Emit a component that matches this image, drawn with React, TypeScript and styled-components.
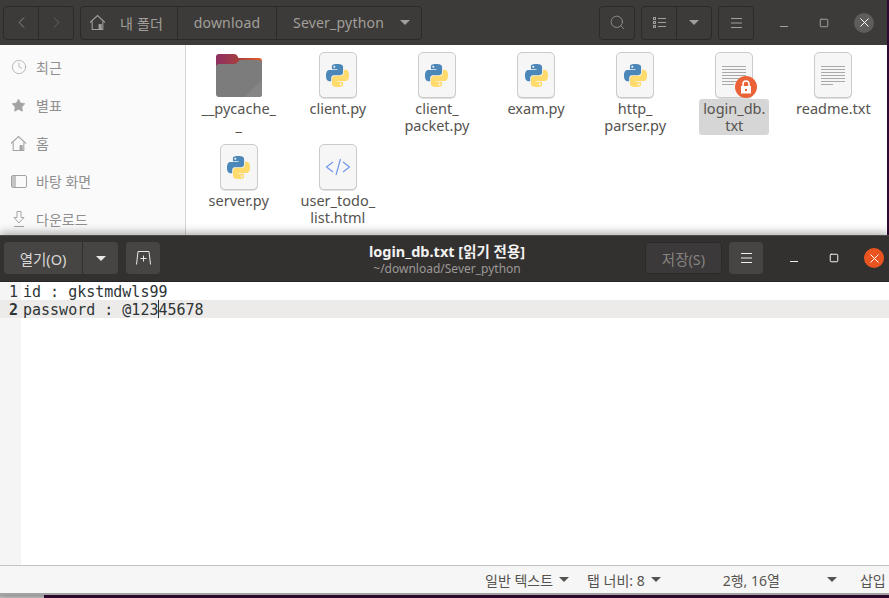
import React from "react";
import styled, { createGlobalStyle } from "styled-components";
import { ChevronLeft, ChevronRight, Search, Square, X, Star, Clock } from "lucide-react";

const UI = `"Noto Sans", "Noto Sans CJK KR", sans-serif`;

const Global = createGlobalStyle`
  html, body { margin: 0; padding: 0; background: #2c0a2e; overflow: hidden; }
  * { box-sizing: border-box; }
`;

const Desktop = styled.div`
  width: 889px; height: 598px; display: flex; flex-direction: column;
  background: #2f0a31; font-family: ${UI}; overflow: hidden;
`;
const FilesWindow = styled.section`
  width: 887px; height: 235px; flex: none; display: flex; flex-direction: column; background: #fff;
`;
const FilesHeader = styled.header`
  height: 45px; flex: none; background: #3d3b39; display: flex; align-items: center; padding: 0 0 0 3px;
`;
const Group = styled.div<{ $w: number; $ml?: number }>`
  width: ${p => p.$w}px; height: 34px; margin-left: ${p => p.$ml ?? 0}px; flex: none;
  display: flex; border: 1px solid #2b2a28; border-radius: 4px; background: #3d3b39;
`;
const Seg = styled.div<{ $w?: number; $last?: boolean; $pad?: number }>`
  ${p => (p.$w ? `width:${p.$w}px;flex:none;` : "flex:1;")}
  display: flex; align-items: center; justify-content: ${p => (p.$pad !== undefined ? "flex-start" : "center")};
  padding-left: ${p => p.$pad ?? 0}px;
  border-right: ${p => (p.$last ? "none" : "1px solid #2b2a28")};
  color: #a19f9b; font-size: 14px; white-space: nowrap;
`;
const PathText = styled.span<{ $ml?: number }>`
  margin-left: ${p => p.$ml ?? 0}px; letter-spacing: 0.2px;
`;
const Caret = styled.span<{ $c?: string; $ml?: number }>`
  display: inline-block; width: 0; height: 0; flex: none; margin-left: ${p => p.$ml ?? 0}px;
  border-left: 5px solid transparent; border-right: 5px solid transparent;
  border-top: 5px solid ${p => p.$c ?? "#a19f9b"};
`;
const WinControls = styled.div<{ $ml: number; $gap: number }>`
  display: flex; align-items: center; margin-left: ${p => p.$ml}px; gap: ${p => p.$gap}px;
`;
const WinBtn = styled.div`
  width: 20px; height: 20px; display: flex; align-items: center; justify-content: center; flex: none;
`;
const MinBar = styled.span<{ $c: string }>`
  width: 8px; height: 1px; background: ${p => p.$c}; margin-top: 7px;
`;
const CloseBtn = styled(WinBtn)<{ $bg: string }>`
  border-radius: 50%; background: ${p => p.$bg}; color: #fff;
`;
const FilesBody = styled.div`
  flex: 1; display: flex; min-height: 0; overflow: hidden;
`;
const Sidebar = styled.nav`
  width: 186px; flex: none; background: #fafafa; border-right: 1px solid #d6d6d6;
  padding-top: 3px; display: flex; flex-direction: column;
`;
const SideRow = styled.div`
  height: 38px; flex: none; display: flex; align-items: center; padding-left: 10px; gap: 9px;
  color: #8f8f8f; font-size: 14px;
`;
const SideIcon = styled.span`
  width: 17px; height: 17px; display: flex; align-items: center; justify-content: center; color: #a3a3a3; flex: none;
`;
const FileGrid = styled.div`
  flex: 1; background: #fff; padding: 7px 0 0 3.2px; display: grid;
  grid-template-columns: repeat(7, 99.12px); grid-auto-rows: 92px;
`;
const FileCell = styled.div`
  display: flex; flex-direction: column; align-items: center;
`;
const IconBox = styled.div`
  position: relative; width: 46px; height: 46px; display: flex; justify-content: center; align-items: center; flex: none;
`;
const Page = styled.div`
  width: 38px; height: 46px; border: 1px solid #cbcbcb; border-radius: 5px; background: #f6f6f6;
  box-shadow: 0 1px 0 #dedede; display: flex; align-items: center; justify-content: center;
`;
const TextLines = styled.div`
  width: 24px; display: flex; flex-direction: column; gap: 2px;
`;
const TextLine = styled.span<{ $short?: boolean }>`
  height: 1px; background: #a9a9a9; width: ${p => (p.$short ? "12px" : "24px")};
`;
const LockBadge = styled.div`
  position: absolute; left: 24px; top: 24px; width: 22px; height: 22px; border-radius: 50%;
  background: #ec6237; display: flex; align-items: center; justify-content: center;
`;
const FileLabel = styled.div<{ $sel?: boolean }>`
  margin-top: 1px; min-width: 70px; padding: 1px 2px 1px; text-align: center; white-space: pre-line;
  font-size: 14.5px; line-height: 17px; color: #55534f; border-radius: 3px;
  background: ${p => (p.$sel ? "#d6d6d6" : "transparent")};
`;
const EditorWindow = styled.section`
  position: relative; width: 889px; height: 360px; flex: none; display: flex; flex-direction: column;
  background: #fff; box-shadow: 0 -2px 9px rgba(0,0,0,.35);
`;
const EditorHeader = styled.header`
  height: 47px; flex: none; display: flex; align-items: center; padding: 0 0 1px 4px;
  background: #333030; border-top: 1px solid #4d4b48; border-bottom: 1px solid #262424;
`;
const SolidBtn = styled.div<{ $w: number; $ml?: number }>`
  width: ${p => p.$w}px; height: 32px; flex: none; margin-left: ${p => p.$ml ?? 0}px;
  background: #474543; border-radius: 4px; color: #efefed; font-size: 14px;
  display: flex; align-items: center; justify-content: center;
`;
const SplitBtn = styled.div`
  width: 114px; height: 32px; flex: none; display: flex; border-radius: 4px; background: #474543;
`;
const SplitPart = styled.div<{ $w: number; $sep?: boolean }>`
  width: ${p => p.$w}px; display: flex; align-items: center; justify-content: center;
  color: #d8d8d6; font-size: 14.5px; border-right: ${p => (p.$sep ? "1px solid #333030" : "none")};
`;
const DisabledBtn = styled.div`
  width: 77px; height: 32px; flex: none; border: 1px solid #2b2929; border-radius: 4px;
  background: #3b3939; color: #858380; font-size: 14.5px; display: flex; align-items: center; justify-content: center;
`;
const TitleBox = styled.div`
  width: 485px; flex: none; display: flex; flex-direction: column; align-items: center; padding: 3px 0 0 89px;
`;
const Title = styled.div`
  color: #f2f2f0; font-weight: 700; font-size: 14.5px; line-height: 18px;
`;
const Subtitle = styled.div`
  color: #9b9996; font-size: 12px; line-height: 17px;
`;
const EditorBody = styled.div`
  flex: 1; display: flex; flex-direction: column; background: #fff;
  background-image: linear-gradient(#f5f5f5, #f5f5f5); background-size: 21px 100%; background-repeat: no-repeat;
  font-family: "DejaVu Sans Mono", monospace; font-size: 15px; color: #2e3436;
`;
const CodeLine = styled.div<{ $cur?: boolean }>`
  height: 18px; line-height: 20px; display: flex; background: ${p => (p.$cur ? "#ecebe9" : "transparent")};
`;
const LineNo = styled.span<{ $cur?: boolean }>`
  width: 18px; text-align: right; flex: none; font-weight: ${p => (p.$cur ? 700 : 400)}; margin-right: 5px;
`;
const Code = styled.span`
  white-space: pre;
`;
const TextCaret = styled.span`
  display: inline-block; width: 1px; height: 18px; margin-right: -1px; background: #2e3436; vertical-align: top;
`;
const StatusBar = styled.footer`
  height: 30px; flex: none; display: flex; align-items: center; background: #f6f6f6;
  border-top: 1px solid #c4c4c4; border-bottom: 2px solid #a3a3a3; color: #55534f; font-size: 14px;
`;
const StatusText = styled.span<{ $ml: number }>`
  margin-left: ${p => p.$ml}px; white-space: nowrap;
`;
const BottomEdge = styled.div`
  flex: 1; display: flex;
`;
const EdgeLeft = styled.div`
  width: 44px; background: linear-gradient(#a8a8a8, #c2c2c2);
`;

const BLUE = "M14.25.18l.9.2.73.26.59.3.45.32.34.34.25.34.16.33.1.3.04.26.02.2-.01.13V8.5l-.05.63-.13.55-.21.46-.26.38-.3.31-.33.25-.35.19-.35.14-.33.1-.3.07-.26.04-.21.02H8.77l-.69.05-.59.14-.5.22-.41.27-.33.32-.27.35-.2.36-.15.37-.1.35-.07.32-.04.27-.02.21v3.06H3.17l-.21-.03-.28-.07-.32-.12-.35-.18-.36-.26-.36-.36-.35-.46-.32-.59-.28-.73-.21-.88-.14-1.05-.05-1.23.06-1.22.16-1.04.24-.87.32-.71.36-.57.4-.44.42-.33.42-.24.4-.16.36-.1.32-.05.24-.01h.16l.06.01h8.16v-.83H6.18l-.01-2.75-.02-.37.05-.34.11-.31.17-.28.25-.26.31-.23.38-.2.44-.18.51-.15.58-.12.64-.1.71-.06.77-.04.84-.02 1.27.05zm-6.3 1.98l-.23.33-.08.41.08.41.23.34.33.22.41.09.41-.09.33-.22.23-.34.08-.41-.08-.41-.23-.33-.33-.22-.41-.09-.41.09z";
const YELLOW = "M21.04 6.11l.28.06.32.12.35.18.36.27.36.35.35.47.32.59.28.73.21.88.14 1.04.05 1.23-.06 1.23-.16 1.04-.24.86-.32.71-.36.57-.4.45-.42.33-.42.24-.4.16-.36.09-.32.05-.24.02-.16-.01h-8.22v.82h5.84l.01 2.76.02.36-.05.34-.11.31-.17.29-.25.25-.31.24-.38.2-.44.17-.51.15-.58.13-.64.09-.71.07-.77.04-.84.01-1.27-.04-1.07-.14-.9-.2-.73-.25-.59-.3-.45-.33-.34-.34-.25-.34-.16-.33-.1-.3-.04-.25-.02-.2.01-.13v-5.34l.05-.64.13-.54.21-.46.26-.38.3-.32.33-.24.35-.2.35-.14.33-.1.3-.06.26-.04.21-.02.13-.01h5.84l.69-.05.59-.14.5-.21.41-.28.33-.32.27-.35.2-.36.15-.36.1-.35.07-.32.04-.28.02-.21V6.07h2.09l.14.01zm-6.47 14.25l-.23.33-.08.41.08.41.23.33.33.23.41.08.41-.08.33-.23.23-.33.08-.41-.08-.41-.23-.33-.33-.23-.41-.08-.41.08z";

const PyLogo = () => (
  <svg width="23" height="23" viewBox="0 0 24 24">
    <path d={BLUE} fill="#4c87ba" />
    <path d={YELLOW} fill="#ffdb6e" />
  </svg>
);
const HomeGlyph = ({ c, s = 17 }: { c: string; s?: number }) => (
  <svg width={s} height={s} viewBox="0 0 16 16" fill="none" stroke={c} strokeWidth="1">
    <path d="M1 8 8 1.5 15 8" />
    <path d="M3 7v7.5h10V7" />
    <path d="M9 14.5V9.5h3v5" fill={c} stroke="none" />
  </svg>
);
const FolderIcon = () => (
  <svg width="46" height="43" viewBox="0 0 46 43">
    <defs>
      <linearGradient id="fTop" x1="0" y1="0" x2="1" y2="0">
        <stop offset="0" stopColor="#8e2f62" />
        <stop offset=".5" stopColor="#a5413f" />
        <stop offset="1" stopColor="#e95f2b" />
      </linearGradient>
    </defs>
    <path d="M3 0h15c2 0 3 1 4 3l.5 1H43a3 3 0 0 1 3 3v12H0V3a3 3 0 0 1 3-3z" fill="url(#fTop)" />
    <path d="M3 10h15c2 0 3-.6 4-2.2.6-1 1.4-1.8 3-1.8h18a3 3 0 0 1 3 3v31a3 3 0 0 1-3 3H3a3 3 0 0 1-3-3V13a3 3 0 0 1 3-3z" fill="#7c7c7c" />
    <path d="M46 26v14a3 3 0 0 1-3 3H29z" fill="#858585" />
  </svg>
);
const HtmlIcon = () => (
  <svg width="26" height="22" viewBox="0 0 26 22" fill="none" stroke="#6f97ea" strokeWidth="1.2">
    <path d="M8 6 1.5 11 8 16" />
    <path d="M15.5 3 11 19" />
    <path d="M18 6l6.5 5L18 16" />
  </svg>
);
const LockGlyph = () => (
  <svg width="12" height="14" viewBox="0 0 12 14">
    <path d="M3 6V4a3 3 0 0 1 6 0v2" fill="none" stroke="#fff" strokeWidth="1.6" />
    <path fillRule="evenodd" d="M1 6h10v7.5H1zM5 9v2h2V9z" fill="#fff" />
  </svg>
);
const ListGlyph = () => (
  <svg width="13" height="12" viewBox="0 0 13 12" fill="none" stroke="#a19f9b">
    <rect x=".5" y=".5" width="2" height="2" />
    <rect x=".5" y="4.5" width="2" height="2" />
    <rect x=".5" y="8.5" width="2" height="2" />
    <path d="M5 1.5h8M5 5.5h8M5 9.5h8" />
  </svg>
);
const Burger = ({ c }: { c: string }) => (
  <svg width="11" height="10" viewBox="0 0 11 10" stroke={c} fill="none">
    <path d="M0 .5h11M0 5h11M0 9.5h11" />
  </svg>
);
const DesktopGlyph = () => (
  <svg width="16" height="13" viewBox="0 0 16 13">
    <rect x=".5" y=".5" width="15" height="12" rx="1.5" fill="none" stroke="#a3a3a3" />
    <rect x="1" y="1" width="4" height="11" fill="#c4c4c4" />
  </svg>
);
const DownloadGlyph = () => (
  <svg width="12" height="16" viewBox="0 0 12 16" fill="none" stroke="#a3a3a3">
    <path d="M4 .5h4v6h3L6 12 1 6.500h3z" />
    <path d="M1 15.500h10" />
  </svg>
);
const NewTabGlyph = () => (
  <svg width="15" height="14" viewBox="0 0 15 14" fill="none" stroke="#e8e8e6">
    <path d="M.5 13.5 2 .5h11l1.5 13" />
    <path d="M7.5 4.5v6M4.500 7.5h6" />
  </svg>
);

type Kind = "py" | "doc" | "lock" | "folder" | "html";
const FILES: { name: string; kind: Kind; sel?: boolean }[] = [
  { name: "__pycache_\n_", kind: "folder" },
  { name: "client.py", kind: "py" },
  { name: "client_\npacket.py", kind: "py" },
  { name: "exam.py", kind: "py" },
  { name: "http_\nparser.py", kind: "py" },
  { name: "login_db.\ntxt", kind: "lock", sel: true },
  { name: "readme.txt", kind: "doc" },
  { name: "server.py", kind: "py" },
  { name: "user_todo_\nlist.html", kind: "html" },
];

const DocLines = () => (
  <TextLines>
    {[0, 1, 2, 3, 4, 5].map(i => <TextLine key={i} />)}
    <TextLine $short />
  </TextLines>
);

const FileIcon = ({ kind }: { kind: Kind }) => {
  if (kind === "folder") return <IconBox><FolderIcon /></IconBox>;
  return (
    <IconBox>
      <Page>
        {kind === "py" && <PyLogo />}
        {kind === "html" && <HtmlIcon />}
        {(kind === "doc" || kind === "lock") && <DocLines />}
      </Page>
      {kind === "lock" && <LockBadge><LockGlyph /></LockBadge>}
    </IconBox>
  );
};

const SIDE = [
  { label: "최근", icon: <Clock size={16} strokeWidth={1.1} /> },
  { label: "별표", icon: <Star size={15} fill="#a3a3a3" strokeWidth={1} /> },
  { label: "홈", icon: <HomeGlyph c="#a3a3a3" /> },
  { label: "바탕 화면", icon: <DesktopGlyph /> },
  { label: "다운로드", icon: <DownloadGlyph /> },
];

export default function App() {
  return (
    <Desktop>
      <Global />
      <FilesWindow>
        <FilesHeader>
          <Group $w={71}>
            <Seg $w={35}><ChevronLeft size={19} strokeWidth={1} /></Seg>
            <Seg $last><ChevronRight size={19} strokeWidth={1} color="#6f6d6a" /></Seg>
          </Group>
          <Group $w={342} $ml={6}>
            <Seg $w={97} $pad={8}><HomeGlyph c="#a19f9b" /><PathText $ml={14}>내 폴더</PathText></Seg>
            <Seg $w={99}><PathText>download</PathText></Seg>
            <Seg $last $pad={16}><PathText>Sever_python</PathText><Caret $ml={16} /></Seg>
          </Group>
          <Group $w={36} $ml={177}><Seg $last><Search size={17} strokeWidth={1.1} /></Seg></Group>
          <Group $w={71} $ml={6}>
            <Seg $w={35}><ListGlyph /></Seg>
            <Seg $last><Caret /></Seg>
          </Group>
          <Group $w={36} $ml={6}><Seg $last><Burger c="#a19f9b" /></Seg></Group>
          <WinControls $ml={20} $gap={20}>
            <WinBtn><MinBar $c="#a19f9b" /></WinBtn>
            <WinBtn><Square size={10} strokeWidth={1} color="#a19f9b" absoluteStrokeWidth /></WinBtn>
            <CloseBtn $bg="#5f5d5b"><X size={15} strokeWidth={1.6} /></CloseBtn>
          </WinControls>
        </FilesHeader>
        <FilesBody>
          <Sidebar>
            {SIDE.map(s => (
              <SideRow key={s.label}><SideIcon>{s.icon}</SideIcon>{s.label}</SideRow>
            ))}
          </Sidebar>
          <FileGrid>
            {FILES.map(f => (
              <FileCell key={f.name}>
                <FileIcon kind={f.kind} />
                <FileLabel $sel={f.sel}>{f.name}</FileLabel>
              </FileCell>
            ))}
          </FileGrid>
        </FilesBody>
      </FilesWindow>
      <EditorWindow>
        <EditorHeader>
          <SplitBtn>
            <SplitPart $w={79} $sep>열기(O)</SplitPart>
            <SplitPart $w={35}><Caret $c="#e8e8e6" /></SplitPart>
          </SplitBtn>
          <SolidBtn $w={34} $ml={8}><NewTabGlyph /></SolidBtn>
          <TitleBox>
            <Title>login_db.txt [읽기 전용]</Title>
            <Subtitle>~/download/Sever_python</Subtitle>
          </TitleBox>
          <DisabledBtn>저장(S)</DisabledBtn>
          <SolidBtn $w={34} $ml={7}><Burger c="#efefed" /></SolidBtn>
          <WinControls $ml={21} $gap={20}>
            <WinBtn><MinBar $c="#f0f0f0" /></WinBtn>
            <WinBtn><Square size={10} strokeWidth={1} color="#f0f0f0" absoluteStrokeWidth /></WinBtn>
            <CloseBtn $bg="#e95420"><X size={15} strokeWidth={1.6} /></CloseBtn>
          </WinControls>
        </EditorHeader>
        <EditorBody>
          <CodeLine><LineNo>1</LineNo><Code>id : gkstmdwls99</Code></CodeLine>
          <CodeLine $cur><LineNo $cur>2</LineNo><Code>password : @123<TextCaret />45678</Code></CodeLine>
        </EditorBody>
        <StatusBar>
          <StatusText $ml={485}>일반 텍스트</StatusText>
          <Caret $c="#55534f" $ml={6} />
          <StatusText $ml={18}>탭 너비: 8</StatusText>
          <Caret $c="#55534f" $ml={6} />
          <StatusText $ml={62}>2행, 16열</StatusText>
          <Caret $c="#55534f" $ml={47} />
          <StatusText $ml={23}>삽입</StatusText>
        </StatusBar>
      </EditorWindow>
      <BottomEdge><EdgeLeft /></BottomEdge>
    </Desktop>
  );
}
